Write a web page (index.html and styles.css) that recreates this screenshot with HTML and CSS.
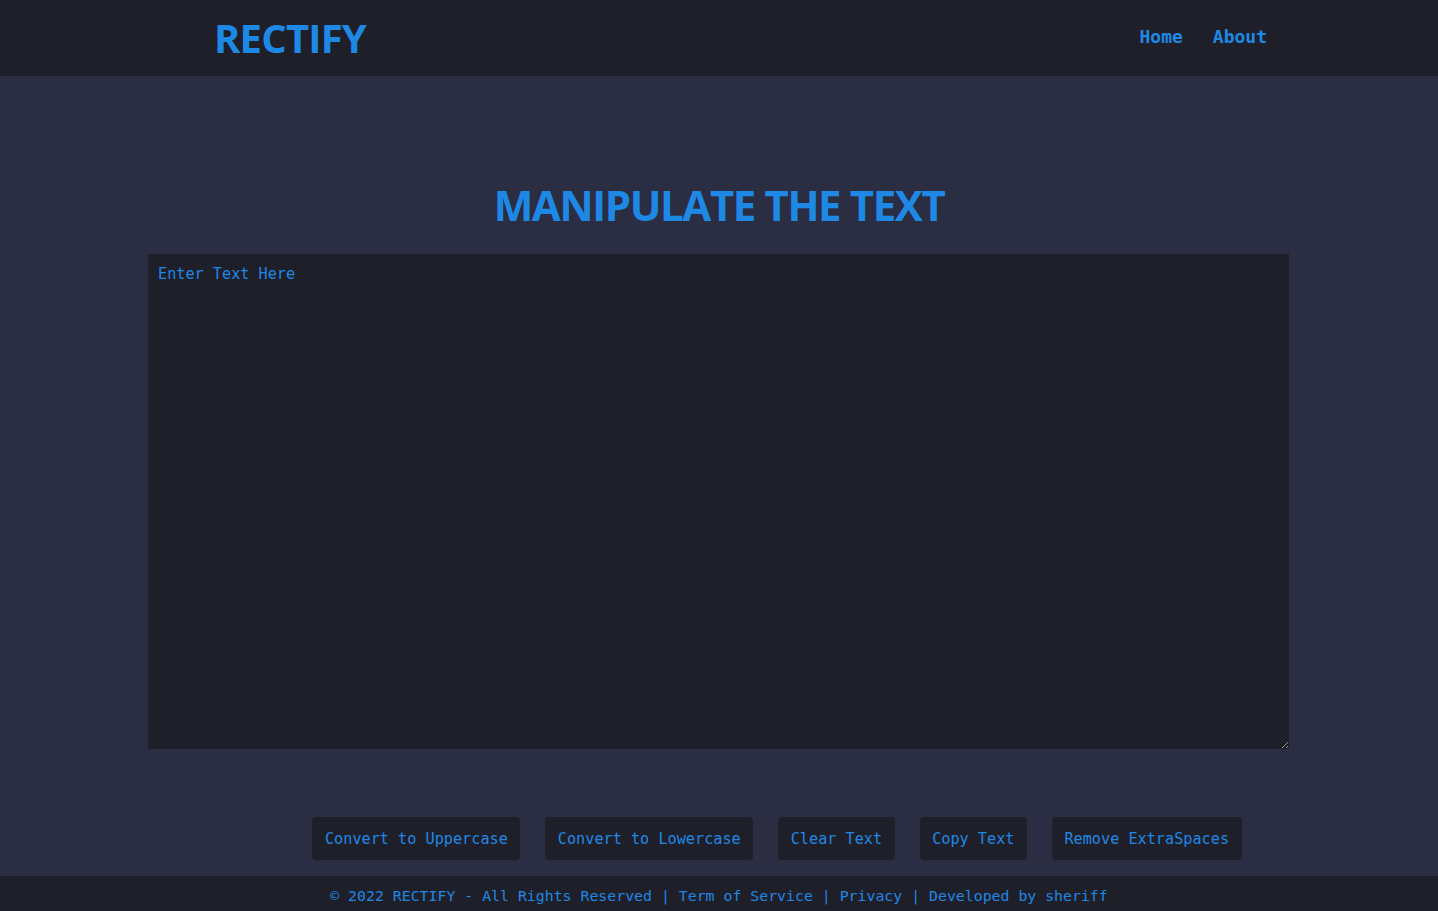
FILE: index.html
```html
<!DOCTYPE html>
<html lang="en">
<head>
<meta charset="utf-8">
<title>Rectify</title>
<link rel="stylesheet" href="styles.css">
</head>
<body>
<header class="topbar">
  <div class="brand">RECTIFY</div>
  <nav class="nav">
    <a href="#" class="nav-link">Home</a>
    <a href="#" class="nav-link">About</a>
  </nav>
</header>
<main class="main">
  <h1 class="title">MANIPULATE THE TEXT</h1>
  <textarea class="editor" placeholder="Enter Text Here"></textarea>
  <div class="actions">
    <button class="btn">Convert to Uppercase</button>
    <button class="btn">Convert to Lowercase</button>
    <button class="btn">Clear Text</button>
    <button class="btn">Copy Text</button>
    <button class="btn">Remove ExtraSpaces</button>
  </div>
</main>
<footer class="footer">© 2022 RECTIFY - All Rights Reserved | Term of Service | Privacy | Developed by sheriff</footer>
</body>
</html>
```
FILE: styles.css
```css
* { box-sizing: border-box; }
html, body { margin: 0; padding: 0; }
body {
  background: #2b2d42;
  color: #1e88e5;
  font-family: "DejaVu Sans Mono", "Liberation Mono", monospace;
  height: 911px;
  display: flex;
  flex-direction: column;
}
.topbar {
  height: 76px;
  background: #1f1f29;
  display: flex;
  align-items: center;
  justify-content: space-between;
  padding: 0 171px 0 214px;
}
.brand {
  font-family: "Open Sans", "Noto Sans", sans-serif;
  font-weight: 700;
  font-size: 40px;
  letter-spacing: -0.8px;
  color: #1e88e5;
  line-height: 1;
  padding-bottom: 1px;
}
.nav { display: flex; gap: 30px; padding-bottom: 3px; }
.nav-link {
  color: #1e88e5;
  text-decoration: none;
  font-weight: 700;
  font-size: 18px;
}
.main {
  flex: 1;
  display: flex;
  flex-direction: column;
  align-items: center;
  padding-top: 108px;
}
.title {
  font-family: "Open Sans", "Noto Sans", sans-serif;
  font-weight: 700;
  font-size: 42px;
  letter-spacing: -1.4px;
  line-height: 1;
  margin: 0 0 28px 0;
  color: #1e88e5;
}
.editor {
  width: 1141px;
  height: 495px;
  background: #1f1f29;
  border: none;
  outline: none;
  color: #1e88e5;
  font-family: "DejaVu Sans Mono", "Liberation Mono", monospace;
  font-size: 15.2px;
  padding: 11px 10px;
  line-height: 19px;
  margin: 0 1px 0 0;
}
.editor::placeholder { color: #1e88e5; opacity: 1; }
.actions {
  display: flex;
  gap: 25px;
  margin-top: 68px;
  padding-left: 116px;
}
.btn {
  height: 43px;
  background: #1f1f29;
  border: none;
  border-radius: 4px;
  color: #1e88e5;
  font-family: "DejaVu Sans Mono", "Liberation Mono", monospace;
  font-size: 15.2px;
  padding: 1px 12.5px 0;
}
.footer {
  height: 35px;
  background: #1f1f29;
  display: flex;
  align-items: center;
  justify-content: center;
  font-size: 14.85px;
  padding-top: 4px;
  color: #1e88e5;
}
```
